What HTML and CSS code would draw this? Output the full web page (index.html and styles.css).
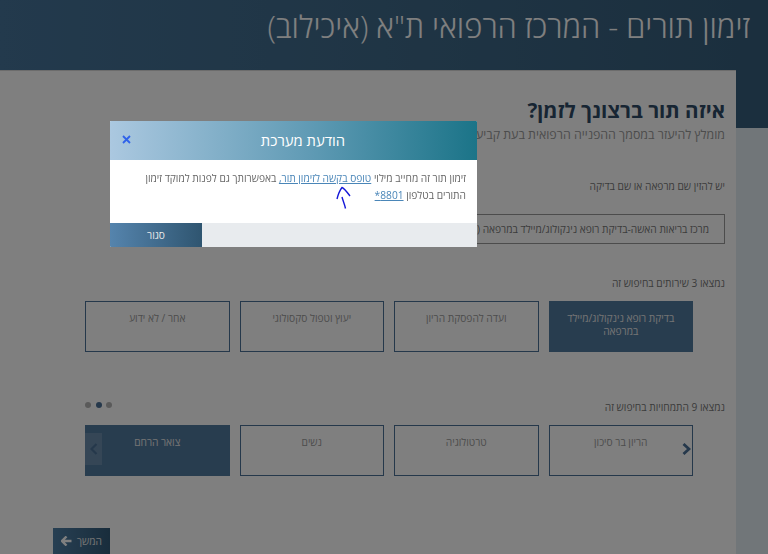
FILE: index.html
```html
<!DOCTYPE html>
<html lang="he" dir="rtl">
<head>
<meta charset="utf-8">
<title>זימון תורים</title>
<link rel="stylesheet" href="styles.css">
</head>
<body>
<header class="top">
  <h1 class="top-title">זימון תורים - המרכז הרפואי ת"א (איכילוב)</h1>
</header>
<main class="card">
  <h2 class="q-title">איזה תור ברצונך לזמן?</h2>
  <p class="q-sub">מומלץ להיעזר במסמך ההפנייה הרפואית בעת קביעת התור</p>
  <p class="field-label">יש להזין שם מרפאה או שם בדיקה</p>
  <div class="field">מרכז בריאות האשה-בדיקת רופא נינקולוג/מיילד במרפאה (6)</div>
  <p class="sec-label sec-services">נמצאו 3 שירותים בחיפוש זה</p>
  <div class="tiles">
    <div class="tile tile-on">בדיקת רופא נינקולוג/מיילד במרפאה</div>
    <div class="tile">ועדה להפסקת הריון</div>
    <div class="tile">יעוץ וטפול סקסולוגי</div>
    <div class="tile">אחר / לא ידוע</div>
  </div>
  <div class="sec-row">
    <p class="sec-label">נמצאו 9 התמחויות בחיפוש זה</p>
    <div class="dots"><span class="dot"></span><span class="dot dot-on"></span><span class="dot"></span></div>
  </div>
  <div class="tiles carousel">
    <div class="tile">הריון בר סיכון</div>
    <div class="tile">טרטולוגיה</div>
    <div class="tile">נשים</div>
    <div class="tile tile-on">צואר הרחם</div>
    <svg class="next" width="9" height="12" viewBox="0 0 9 12"><path d="M1.500 1 L7 6 L1.500 11" fill="none" stroke="#4a7097" stroke-width="2.800"/></svg>
    <div class="prev"><svg width="8" height="12" viewBox="0 0 8 12"><path d="M6.500 1 L1.500 6 L6.500 11" fill="none" stroke="#4a7097" stroke-width="2.200"/></svg></div>
  </div>
  <div class="actions">
    <button class="go">המשך <svg width="11" height="10" viewBox="0 0 11 10"><path d="M5.500 0.500 L1 5 L5.500 9.500 M1.500 5 H10.500" fill="none" stroke="#fff" stroke-width="2.400"/></svg></button>
  </div>
</main>
<div class="overlay">
  <section class="modal">
    <div class="modal-head">
      <span class="modal-title">הודעת מערכת</span>
      <svg class="modal-x" width="9" height="9" viewBox="0 0 9 9"><path d="M1 1 L8 8 M8 1 L1 8" fill="none" stroke="#2f62ea" stroke-width="1.800"/></svg>
    </div>
    <div class="modal-body">
      זימון תור זה מחייב מילוי <a href="#" class="lnk">טופס בקשה לזימון תור,</a> באפשרותך גם לפנות למוקד זימון התורים בטלפון <a href="#" class="lnk">8801*</a>
      <svg class="scribble" width="16" height="24" viewBox="0 0 16 24"><path d="M1 13 C2 9 4 4 6 1.500 C8 2 11 6 14 10 M6 11 C7 15 8.500 18 9.500 22.500" fill="none" stroke="#1417d8" stroke-width="1.400"/></svg>
    </div>
    <div class="modal-foot">
      <button class="close">סגור</button>
    </div>
  </section>
</div>
</body>
</html>
```

FILE: styles.css
```css
* { box-sizing: border-box; }
html, body { height: 100%; }
body {
  margin: 0;
  height: 554px;
  overflow: hidden;
  background: #e2edf3;
  font-family: "Open Sans", "Liberation Sans", sans-serif;
  color: #777;
}
p, h1, h2 { margin: 0; }
.top {
  height: 128px;
  padding: 3px 18px 0 0;
  background: linear-gradient(90deg, #46749a 0%, #3f6a8a 50%, #365e7c 100%);
}
.top-title {
  font-size: 31px;
  font-weight: 300;
  line-height: 46px;
  color: #fff;
}
.card {
  width: 736px;
  height: 500px;
  margin-top: -58px;
  margin-right: 32px;
  padding: 25px 11px 0 0;
  background: #fff;
  border-top: 1px solid #d8d8d8;
}
.q-title {
  font-size: 20.600px;
  font-weight: 700;
  line-height: 28px;
  color: #2f4b66;
}
.q-sub { font-size: 12.400px; line-height: 17px; color: #999; margin-top: 2px; }
.field-label { font-size: 10.200px; line-height: 16px; margin-top: 35px; }
.field {
  width: 600px;
  height: 30px;
  margin-top: 20px;
  padding: 0 15px;
  border: 1px solid #999;
  font-size: 10.200px;
  line-height: 28px;
  white-space: nowrap;
  overflow: hidden;
}
.sec-label { font-size: 10.200px; line-height: 16px; }
.sec-services { margin-top: 31px; }
.tiles {
  display: grid;
  grid-template-columns: repeat(4, 144.500px);
  gap: 10px;
  margin-top: 10px;
  margin-right: 32px;
  width: 608px;
}
.tile {
  height: 51px;
  padding: 10px 14px 0;
  border: 1px solid #4a7097;
  font-size: 10.200px;
  line-height: 13px;
  text-align: center;
  color: #9a9a9a;
}
.tile-on { background: #507a9f; border-color: #507a9f; color: #e8e8e8; }
.sec-row {
  display: flex;
  justify-content: space-between;
  align-items: center;
  width: 640px;
  margin-top: 47px;
}
.dots { display: flex; gap: 4.500px; direction: ltr; margin-top: -4px; }
.dot { width: 6px; height: 6px; border-radius: 50%; background: #b5b5b5; }
.dot-on { background: #4a7097; }
.carousel { position: relative; margin-top: 10px; }
.next { position: absolute; right: 2px; top: 18px; }
.prev {
  position: absolute;
  left: 0;
  top: 8px;
  width: 17px;
  height: 32px;
  display: flex;
  align-items: center;
  justify-content: center;
  background: rgba(255, 255, 255, .15);
}
.actions { display: flex; justify-content: flex-end; width: 672px; margin-top: 52px; }
.go {
  width: 57px;
  height: 30px;
  display: flex;
  align-items: center;
  justify-content: center;
  gap: 5px;
  padding: 0 0 4px;
  border: 0;
  background: linear-gradient(90deg, #4f7fa6, #325a78);
  color: #e8e8e8;
  font: 10.200px "Open Sans", "Liberation Sans", sans-serif;
}
.overlay {
  position: fixed;
  inset: 0;
  background: rgba(0, 0, 0, .5);
}
.modal {
  position: absolute;
  left: 110px;
  top: 121px;
  width: 367px;
  height: 126px;
  display: flex;
  flex-direction: column;
  background: #fff;
  border-radius: 1px;
  overflow: hidden;
}
.modal-head {
  height: 39px;
  flex: none;
  display: flex;
  align-items: center;
  justify-content: center;
  padding: 0 0 1px 19px;
  position: relative;
  background: linear-gradient(90deg, #abc8e0 0%, #5f9ab4 55%, #1b7488 100%);
}
.modal-title { font-size: 14.800px; color: #fff; }
.modal-x {
  position: absolute;
  left: 12px;
  top: 14px;
}
.modal-body {
  position: relative;
  flex: 1;
  padding: 10px 11px 0 10px;
  font-size: 10.200px;
  line-height: 17px;
  color: #666;
}
.lnk { color: #4a86b8; }
.scribble { position: absolute; left: 226px; top: 26px; }
.modal-foot { height: 24px; flex: none; background: #e8ebee; display: flex; justify-content: flex-end; }
.close {
  width: 92px;
  height: 24px;
  border: 0;
  padding: 0;
  background: linear-gradient(90deg, #5584ad, #2f5570);
  color: #e8e8e8;
  font: 10.200px "Open Sans", "Liberation Sans", sans-serif;
}
```
